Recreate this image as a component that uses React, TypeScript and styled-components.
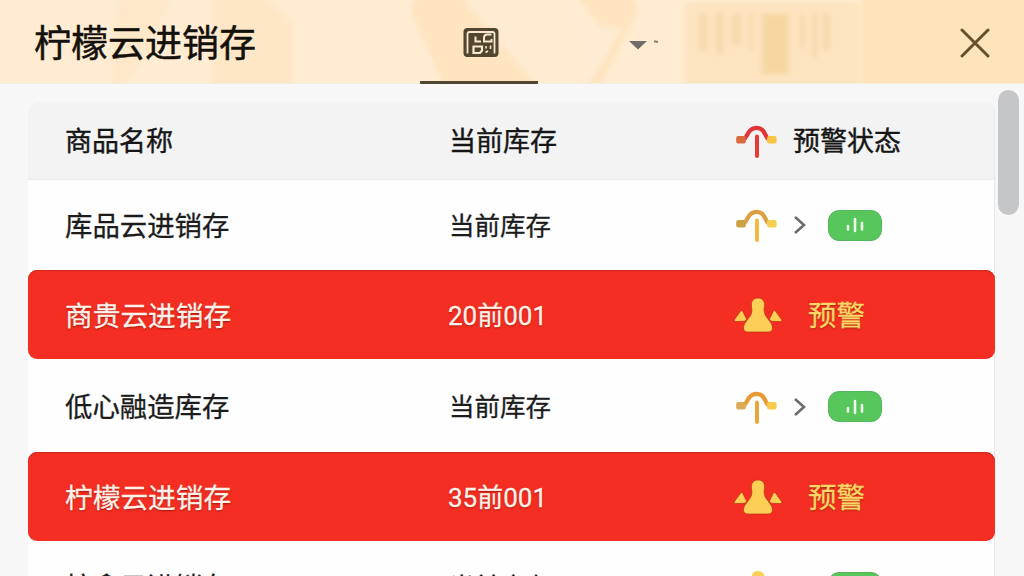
import styled, { createGlobalStyle, css } from "styled-components";

const GlobalStyle = createGlobalStyle`
   * {
      box-sizing: border-box;
   }
   body {
      margin: 0;
      overflow: hidden;
      font-family: "Noto Sans CJK SC", sans-serif;
      color: #1c1c1c;
      -webkit-text-stroke: 0.3px currentColor;
   }
`;

const Window = styled.div`
   display: flex;
   flex-direction: column;
   width: 1024px;
   height: 576px;
   overflow: hidden;
   background-color: #f7f7f7;
`;

const Header = styled.header`
   position: relative;
   display: flex;
   flex: none;
   height: 84px;
   padding: 0 34px;
   background-color: #ffecd3;
   border-bottom: 1px solid #f8ecdb;
`;

const Pattern = styled.svg`
   position: absolute;
   top: 0;
   left: 0;
`;

const Title = styled.h1`
   position: relative;
   width: 386px;
   margin: 0;
   font-size: 37px;
   font-weight: 400;
   line-height: 83px;
   color: #14100c;
   -webkit-text-stroke-width: 0.5px;
`;

const Tab = styled.div`
   position: relative;
   display: flex;
   justify-content: center;
   width: 118px;
   height: 84px;
   padding: 27px 0 0 3px;
   border-bottom: 3px solid #51462f;
   border-radius: 1px;
`;

const Dropdown = styled.div`
   position: relative;
   flex: 1;
   padding: 40px 0 0 91px;
   line-height: 0;
`;

const CloseButton = styled.button`
   position: relative;
   display: flex;
   align-items: center;
   height: 86px;
   padding: 0;
   border: none;
   background: none;
`;

const Body = styled.main`
   display: flex;
   flex: 1;
   min-height: 0;
   padding-left: 28px;
`;

const Table = styled.section`
   width: 967px;
   height: 560px;
   margin-top: 18px;
   background-color: #fefefe;
   border-right: 1px solid #e6e6e6;
   border-radius: 10px 10px 0 0;
`;

const rowGrid = css`
   display: grid;
   grid-template-columns: 384px 286px 1fr;
   align-items: center;
   padding-left: 37px;
`;

const TableHead = styled.div`
   ${rowGrid}
   height: 78px;
   font-size: 27px;
   color: #161616;
   background-color: #f3f3f3;
   border-bottom: 1px solid #ebebeb;
   border-radius: 10px 10px 0 0;
`;

const Name = styled.span`
   padding-bottom: 2px;
`;

const Stock = styled.span<{ $alert?: boolean }>`
   padding-bottom: ${(props) => (props.$alert ? 2 : 3)}px;
   font-size: ${(props) => (props.$alert ? 26 : 25.5)}px;
   ${(props) =>
      props.$alert &&
      css`
         font-family: Roboto, "Noto Sans CJK SC", sans-serif;
         margin-left: -1px;
      `}
`;

const HeadLabel = styled.span`
   padding-bottom: 2px;
   -webkit-text-stroke-width: 0.4px;
`;

const Status = styled.div<{ $gap: number }>`
   display: flex;
   align-items: center;
   gap: ${(props) => props.$gap}px;
`;

const Row = styled.div<{ $alert?: boolean }>`
   ${rowGrid}
   height: ${(props) => (props.$alert ? 89 : 93)}px;
   font-size: ${(props) => (props.$alert ? 27.7 : 27.4)}px;
   ${(props) =>
      props.$alert &&
      css`
         width: 967px;
         color: #fff1e8;
         background-color: #f42e22;
         border-radius: 9px;
         box-shadow: inset 0 1px 1px #c9281c;
         text-shadow: 0 1px 2px #a0150c;
      `}

   ${TableHead} + & {
      height: 90px;
   }

   &:nth-child(4) ${Status} {
      padding-top: 2px;
   }

   &:last-child ${Name}, &:last-child ${Stock} {
      padding-bottom: 6px;
   }
`;

const WarningText = styled.span`
   padding-bottom: 2px;
   font-size: 28.5px;
   color: #fcd667;
   text-shadow: 0 1px 2px #9c2a08;
`;

const Badge = styled.span`
   display: flex;
   align-items: center;
   justify-content: center;
   width: 54px;
   height: 31px;
   margin-left: 5px;
   border: 1px solid #52b556;
   border-radius: 11px;
   background-color: #57c75c;
`;

const Scrollbar = styled.div`
   width: 21px;
   height: 125px;
   margin: 6px 0 0 3px;
   border-radius: 11px;
   background-color: #c5c6c8;
`;

const AlarmSvg = styled.svg<{ $compact?: boolean }>`
   flex: none;
   margin-left: -2px;
   margin-right: ${(props) => (props.$compact ? -6 : 0)}px;
   stroke: ${(props) => (props.$compact ? "none" : "#b93613")};
`;

interface ArrowIconProps {
   stem: string;
   arc: string;
   left: string;
   right: string;
}

const ArrowIcon = ({ stem, arc, left, right }: ArrowIconProps) => (
   <svg width="42" height="34" viewBox="0 0 42 34" fill="none">
      <path d="M8.5 15.5C12.5 14 12.5 3.8 21.7 3.8C30.5 3.8 30 14 34 15.5" stroke={arc} strokeWidth="4.2" />
      <rect x="1.2" y="12" width="9.6" height="7.4" rx="2" fill={left} />
      <rect x="32" y="12" width="9.6" height="7.4" rx="2" fill={right} />
      <path d="M22 12.5V32" stroke={stem} strokeWidth="4" strokeLinecap="round" />
   </svg>
);

const AlarmIcon = ({ compact }: { compact?: boolean }) => (
   <AlarmSvg $compact={compact} width="50" height="38" viewBox="0 0 50 38" fill="#fdcf57" strokeWidth="0.7">
      <path d="M25 2C29.5 2 31.6 5 31.6 9C31.6 12 30.5 13 31.5 17C32.5 22 39.5 26 39.5 32Q39.5 36 35 36H15Q10.5 36 10.5 32C10.5 26 17.5 22 18.5 17C19.5 13 18.4 12 18.4 9C18.4 5 20.5 2 25 2Z" />
      <path d="M8 14.5Q9 14 9.8 15.5L13.5 23Q13.5 25 11 25.3L2 25.6Q.5 25.4 1.5 23.6Z" />
      <path d="M42 14.5Q41 14 40.2 15.5L36.5 23Q36.5 25 39 25.3L48 25.6Q49.5 25.4 48.5 23.6Z" />
   </AlarmSvg>
);

const SealIcon = () => (
   <svg width="36" height="31" viewBox="0 0 36 31" fill="none">
      <rect x="0.5" y="1" width="35" height="29" rx="4" fill="#51462f" />
      <path d="M4.5 26.5V7Q4.5 5 6.5 5H29.5Q31.5 5 31.5 7V26.5" stroke="#f9e8cd" strokeWidth="1.8" />
      <path d="M12.5 9.5V14.5H18M28.5 7.5H24Q21 7.5 21 11V14.5H28.5V12" stroke="#f9e8cd" strokeWidth="2" />
      <path d="M10.5 19.5H19V23.5L17 26H10.5Z" stroke="#f9e8cd" strokeWidth="2.2" />
      <path d="M23 19V21.5M27.5 18.5V22M22.5 25.5L25 24" stroke="#f9e8cd" strokeWidth="1.6" />
   </svg>
);

const HeaderPattern = () => (
   <Pattern width="1024" height="83" viewBox="0 0 1024 83">
      <defs>
         <filter id="soft" x="-10%" y="-10%" width="120%" height="120%">
            <feGaussianBlur stdDeviation="2.4" />
         </filter>
      </defs>
      <g filter="url(#soft)">
         <path d="M118 -6H175L135 74L112 90Z" fill="#fee8c9" />
         <path d="M212 -6H262L293 22V90H212Z" fill="#fee7c6" />
         <path d="M410 10L418 -6H458L540 90H446Z" fill="#fee4bf" />
         <path d="M458 -6L540 90H595L560 -6Z" fill="#ffebd1" />
         <path d="M575 -6H634L639 10L598 90H585L622 29L600 26Z" fill="#fee4bf" />
         <rect x="685" y="2" width="174" height="90" fill="#fde4c0" />
         <rect x="861" y="-6" width="180" height="100" fill="#fde3ba" />
         <g fill="#f6daad">
            <rect x="699" y="14" width="8" height="37" />
            <rect x="716" y="12" width="7" height="42" />
            <rect x="732" y="14" width="9" height="31" />
            <rect x="749" y="13" width="4" height="38" />
            <rect x="762" y="14" width="27" height="60" fill="#f6d7a3" />
            <rect x="800" y="14" width="5" height="34" />
            <rect x="812" y="12" width="5" height="46" />
            <rect x="823" y="14" width="7" height="36" />
         </g>
      </g>
   </Pattern>
);

const normalArrows: ArrowIconProps[] = [
   { stem: "#efba43", arc: "#dca042", left: "#cda247", right: "#f7cf50" },
   { stem: "#e6a83a", arc: "#e89a34", left: "#d9ac55", right: "#fccb4e" },
];

const rows = [
   { name: "库品云进销存", stock: "当前库存", arrow: normalArrows[0] },
   { name: "商贵云进销存", stock: "20前001", alert: true },
   { name: "低心融造库存", stock: "当前库存", arrow: normalArrows[1] },
   { name: "柠檬云进销存", stock: "35前001", alert: true },
   { name: "柠鑫云进销存", stock: "当前库存", bell: true },
];

const LevelBadge = () => (
   <Badge>
      <svg width="18" height="16" viewBox="0 0 18 16" stroke="#effbe9" strokeWidth="2.6" strokeLinecap="round">
         <path d="M2 9V12.5M9 2V14M16 6V12.5" />
      </svg>
   </Badge>
);

const App = () => {
   return (
      <Window>
         <GlobalStyle />
         <Header>
            <HeaderPattern />
            <Title>柠檬云进销存</Title>
            <Tab>
               <SealIcon />
            </Tab>
            <Dropdown>
               <svg width="32" height="12" viewBox="0 0 32 12">
                  <path d="M0 1H18L9 9.5Z" fill="#716b69" />
                  <path d="M25 1.2L29 2" stroke="#8d7c66" strokeWidth="2" />
               </svg>
            </Dropdown>
            <CloseButton aria-label="关闭">
               <svg width="30" height="30" viewBox="0 0 30 30" stroke="#66502c" strokeWidth="3" strokeLinecap="round">
                  <path d="M2 2L28 28M28 2L2 28" />
               </svg>
            </CloseButton>
         </Header>
         <Body>
            <Table>
               <TableHead>
                  <HeadLabel>商品名称</HeadLabel>
                  <HeadLabel>当前库存</HeadLabel>
                  <Status $gap={16}>
                     <ArrowIcon stem="#e23c36" arc="#dd3538" left="#d9693f" right="#f7c443" />
                     <HeadLabel>预警状态</HeadLabel>
                  </Status>
               </TableHead>
               {rows.map((row) => (
                  <Row key={row.name} $alert={row.alert}>
                     <Name>{row.name}</Name>
                     <Stock $alert={row.alert}>{row.stock}</Stock>
                     {row.alert ? (
                        <Status $gap={25}>
                           <AlarmIcon />
                           <WarningText>预警</WarningText>
                        </Status>
                     ) : (
                        <Status $gap={9}>
                           {row.arrow && <ArrowIcon {...row.arrow} />}
                           {row.bell && <AlarmIcon compact />}
                           <svg width="28" height="20" viewBox="0 0 28 20" fill="none" stroke="#6b6b6b" strokeWidth="2.6">
                              {row.arrow && <path d="M9 2L18 10L9 18" />}
                           </svg>
                           <LevelBadge />
                        </Status>
                     )}
                  </Row>
               ))}
            </Table>
            <Scrollbar />
         </Body>
      </Window>
   );
};

export default App;
